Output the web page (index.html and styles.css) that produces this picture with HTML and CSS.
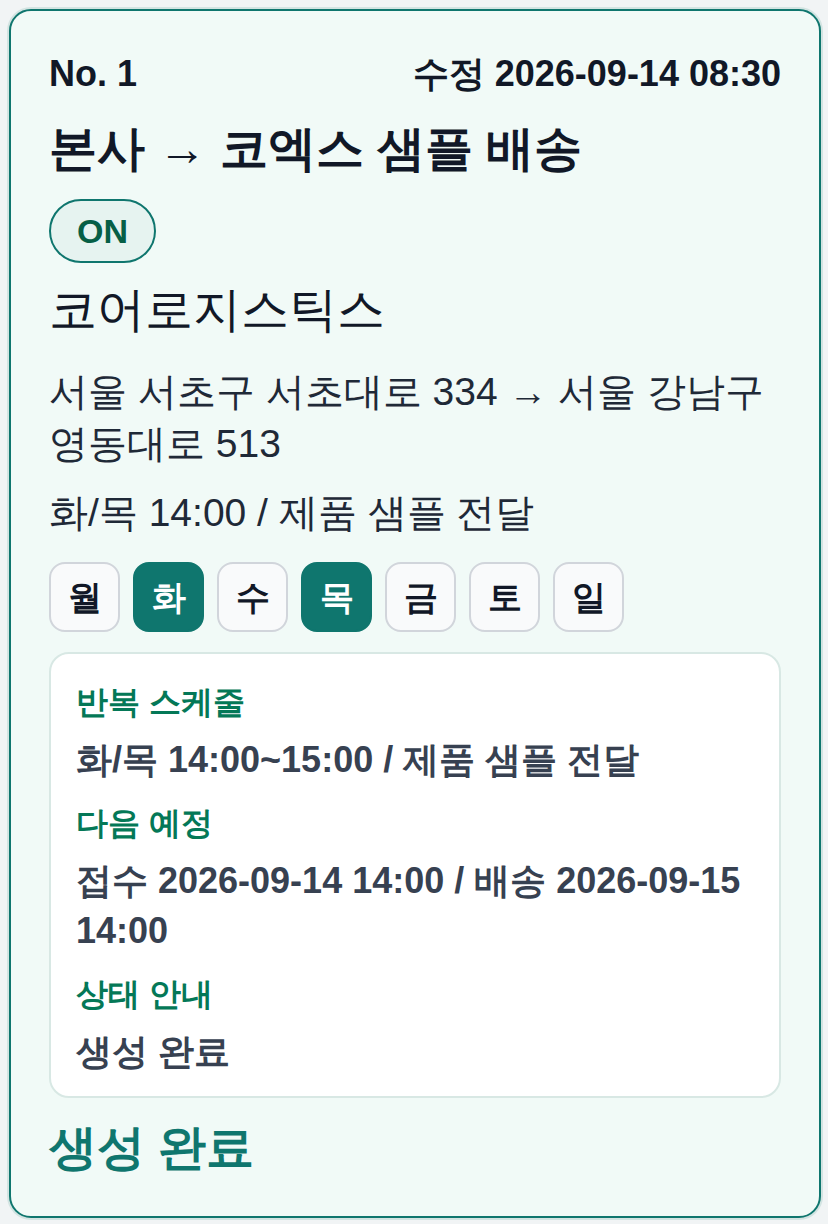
FILE: index.html
```
<!DOCTYPE html>
<html lang="ko">
<head>
<meta charset="utf-8">
<title>No. 1</title>
<link rel="stylesheet" href="styles.css">
</head>
<body>
<div class="page">
  <article class="card">
    <div class="head">
      <span class="no">No. 1</span>
      <span class="edited">수정 2026-09-14 08:30</span>
    </div>
    <h2 class="title">본사 → 코엑스 샘플 배송</h2>
    <div class="badge-row"><span class="badge">ON</span></div>
    <div class="company">코어로지스틱스</div>
    <div class="route">서울 서초구 서초대로 334 → 서울 강남구 영동대로 513</div>
    <div class="summary">화/목 14:00 / 제품 샘플 전달</div>
    <div class="days">
      <span class="day">월</span>
      <span class="day active">화</span>
      <span class="day">수</span>
      <span class="day active">목</span>
      <span class="day">금</span>
      <span class="day">토</span>
      <span class="day">일</span>
    </div>
    <div class="detail">
      <div class="group">
        <div class="label">반복 스케줄</div>
        <div class="value">화/목 14:00~15:00 / 제품 샘플 전달</div>
      </div>
      <div class="group">
        <div class="label">다음 예정</div>
        <div class="value">접수 2026-09-14 14:00 / 배송 2026-09-15 14:00</div>
      </div>
      <div class="group">
        <div class="label">상태 안내</div>
        <div class="value">생성 완료</div>
      </div>
    </div>
    <div class="footer">생성 완료</div>
  </article>
</div>
</body>
</html>
```
FILE: styles.css
```
* { box-sizing: border-box; }
html, body {
  margin: 0;
  padding: 0;
  background: #f1f4f5;
}
body {
  font-family: "Liberation Sans", sans-serif;
  color: #111827;
  word-break: keep-all;
}
.page {
  padding: 9px 7px 7px 9px;
}
.card {
  background: #f1faf7;
  border: 2px solid #0f766e;
  border-radius: 22px;
  box-shadow: 0 0 0 2px #d3e4e2;
  padding: 38px;
  display: flex;
  flex-direction: column;
  gap: 20px;
}
.head {
  display: flex;
  justify-content: space-between;
  align-items: baseline;
  font-size: 36px;
  font-weight: 700;
  line-height: 50px;
}
.title {
  margin: 0;
  font-size: 48px;
  font-weight: 700;
  line-height: 60px;
}
.badge-row { display: flex; }
.badge {
  display: inline-block;
  border: 2px solid #0f766e;
  background: #e6f3f0;
  color: #065f46;
  border-radius: 999px;
  padding: 10px 26px;
  font-size: 34px;
  font-weight: 700;
  line-height: 40px;
}
.company {
  margin-top: -3px;
  font-size: 48px;
  line-height: 60px;
}
.route, .summary {
  font-size: 39px;
  line-height: 52px;
  color: #1f2937;
}
.route { margin-top: 6px; }
.summary { margin-top: -3px; }
.days {
  display: flex;
  gap: 13px;
  margin-top: 3px;
}
.day {
  width: 71px;
  padding: 8px 0;
  text-align: center;
  border: 2px solid #d1d5db;
  background: #f9fafb;
  border-radius: 16px;
  font-size: 34px;
  font-weight: 700;
  line-height: 50px;
  color: #111827;
}
.day.active {
  background: #0f766e;
  border-color: #0f766e;
  color: #ffffff;
}
.detail {
  background: #ffffff;
  border: 2px solid #d8e8e4;
  border-radius: 20px;
  padding: 26px 25px 19px;
  display: flex;
  flex-direction: column;
  gap: 16px;
}
.group {
  display: flex;
  flex-direction: column;
  gap: 11px;
}
.label {
  font-size: 32px;
  font-weight: 700;
  line-height: 44px;
  color: #047857;
}
.value {
  font-size: 36px;
  font-weight: 700;
  line-height: 50px;
  color: #374151;
}
.footer {
  font-size: 48px;
  font-weight: 700;
  line-height: 60px;
  color: #0f766e;
}
```
